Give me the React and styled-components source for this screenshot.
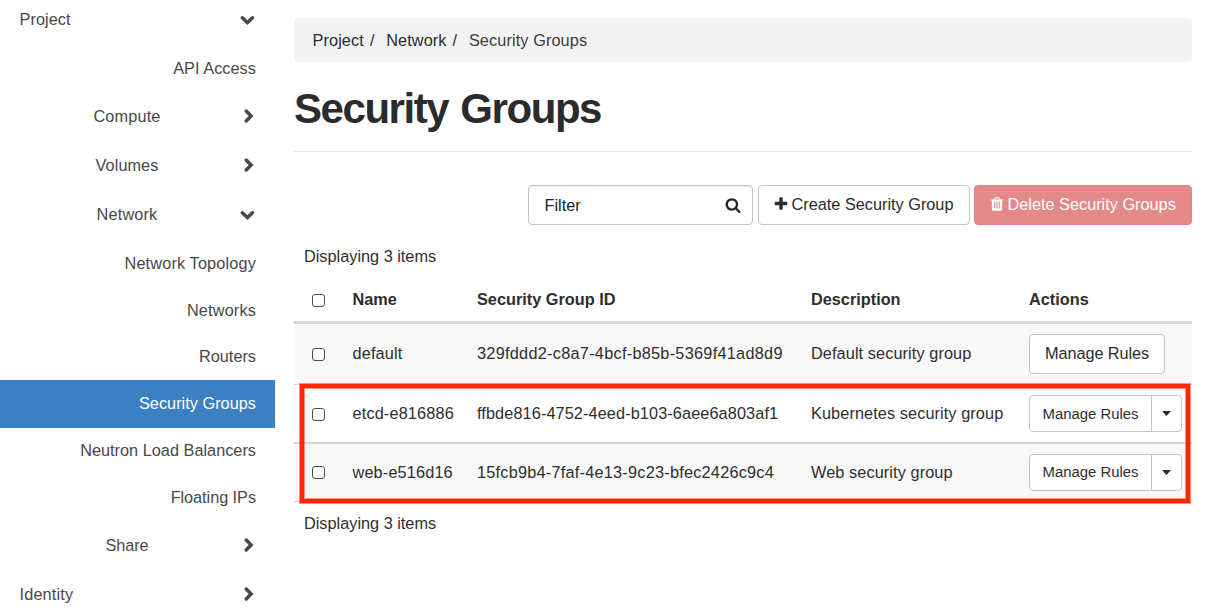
import React from "react";
import styled, { createGlobalStyle } from "styled-components";

const Global = createGlobalStyle`
  * { box-sizing: border-box; }
  html, body { margin: 0; padding: 0; background: #fff; }
  body {
    font-family: "Liberation Sans", Arial, sans-serif;
    font-size: 16.3px;
    line-height: 20px;
    color: #2e2e2e;
    overflow: hidden;
  }
`;

const Page = styled.div`
  display: flex;
  width: 1205px;
  height: 611px;
  overflow: hidden;
`;

/* ---------- sidebar ---------- */

const Sidebar = styled.nav`
  width: 275px;
  flex: none;
  color: #484848;
`;

const NavItem = styled.div`
  display: flex;
  align-items: center;
  height: ${(p) => p.$h}px;
  padding: 0 19px 0 ${(p) => (p.$kind === "top" ? 19.5 : 16)}px;
  padding-bottom: ${(p) => p.$lift || 0}px;
  background: ${(p) => (p.$active ? "#3b80c3" : "transparent")};
  color: ${(p) => (p.$active ? "#fff" : "inherit")};
`;

const NavLabel = styled.span`
  flex: 1;
  white-space: nowrap;
  letter-spacing: ${(p) => p.$track ?? 0.05}px;
  text-align: ${(p) => ({ top: "left", group: "center", leaf: "right" })[p.$kind]};
`;

const ChevronIcon = styled.svg`
  width: 18px;
  height: 18px;
  flex: none;
  fill: none;
  stroke: #484848;
  stroke-width: 3.5;
  stroke-linecap: round;
`;

function Chevron({ dir }) {
  return (
    <ChevronIcon viewBox="0 0 18 18">
      <path d={dir === "down" ? "M4.3 7.8L9.4 12.5L14.5 7.8" : "M8.2 4L13.1 9L8.2 14"} />
    </ChevronIcon>
  );
}

const NAV = [
  { label: "Project", kind: "top", dir: "down", h: 44, lift: 6 },
  { label: "API Access", kind: "leaf", h: 49, lift: 2 },
  { label: "Compute", kind: "group", dir: "right", h: 48, lift: 2, track: 0.15 },
  { label: "Volumes", kind: "group", dir: "right", h: 49, lift: 2 },
  { label: "Network", kind: "group", dir: "down", h: 49, lift: 2, track: 0.15 },
  { label: "Network Topology", kind: "leaf", h: 48, track: 0.15 },
  { label: "Networks", kind: "leaf", h: 46, track: 0.15 },
  { label: "Routers", kind: "leaf", h: 47, lift: 2, track: 0 },
  { label: "Security Groups", kind: "leaf", h: 48, lift: 2, active: true, track: 0.02 },
  { label: "Neutron Load Balancers", kind: "leaf", h: 46, lift: 2, track: 0.01 },
  { label: "Floating IPs", kind: "leaf", h: 47, lift: 2, track: -0.05 },
  { label: "Share", kind: "group", dir: "right", h: 49, lift: 2, track: -0.1 },
  { label: "Identity", kind: "top", dir: "right", h: 49, lift: 2, track: 0.15 },
];

/* ---------- main column ---------- */

const Main = styled.main`
  width: 898px;
  margin-left: 19px;
  padding-top: 18px;
  flex: none;
`;

const Breadcrumb = styled.div`
  display: flex;
  align-items: center;
  height: 44px;
  padding: 0 18px 0 18.5px;
  border-radius: 4px;
  background: #f3f3f3;
  letter-spacing: 0.1px;
`;

const Separator = styled.span`
  width: 22.3px;
  padding-left: 6px;
`;

const Crumb = styled.span`
  color: ${(p) => (p.$current ? "#3c3c3c" : "#2b2b2b")};
`;

const Header = styled.header`
  height: 90px;
  padding-top: 22px;
  border-bottom: 1px solid #e8e8e8;
`;

const Title = styled.h1`
  margin: 0;
  font-size: 42px;
  line-height: 50px;
  font-weight: 700;
  letter-spacing: -1.45px;
  word-spacing: 2px;
  color: #2b2b2b;
`;

const Toolbar = styled.div`
  display: flex;
  justify-content: flex-end;
  margin-top: 33px;
  height: 40px;
`;

const FilterBox = styled.div`
  display: flex;
  align-items: center;
  justify-content: space-between;
  width: 225px;
  padding: 0 11px 0 15.5px;
  border: 1px solid #c4c4c4;
  border-radius: 4px;
  box-shadow: inset 0 1px 1px rgba(0, 0, 0, 0.075);
  color: #222;
`;

const Button = styled.button`
  display: flex;
  align-items: center;
  justify-content: flex-start;
  width: ${(p) => p.$w}px;
  height: 40px;
  margin: 0 0 0 ${(p) => p.$gap || 0}px;
  padding: 0 0 2px ${(p) => p.$inset ?? 14}px;
  border: 1px solid ${(p) => (p.$danger ? "#df8280" : "#c4c4c4")};
  border-radius: 4px;
  background: ${(p) => (p.$danger ? "#e38987" : "#fff")};
  color: ${(p) => (p.$danger ? "#fff" : "#2b2b2b")};
  font: inherit;
  letter-spacing: ${(p) => p.$track || 0}px;
  white-space: nowrap;
`;

const Glyph = styled.svg`
  width: 16px;
  height: 16px;
  fill: currentColor;
  flex: none;
  margin-right: ${(p) => p.$after || 0}px;
`;

const ItemCount = styled.div`
  height: ${(p) => p.$h}px;
  padding: ${(p) => p.$top}px 0 0 10px;
`;

const Table = styled.div`
  position: relative;
`;

const Row = styled.div`
  display: grid;
  grid-template-columns: 58.5px 124.5px 334px 218px 1fr;
  align-items: center;
  height: ${(p) => p.$h}px;
  background: ${(p) => (p.$striped ? "#f8f8f8" : "#fff")};
  border-bottom: ${(p) => p.$line}px solid #d6d6d6;
`;

const HeadRow = styled(Row)`
  font-weight: 700;
  letter-spacing: -0.04px;
  padding-bottom: 1px;
`;

const Cell = styled.div`
  white-space: nowrap;
  letter-spacing: ${(p) => p.$track || 0}px;
  padding-bottom: ${(p) => p.$lift || 0}px;
`;

const Check = styled.div`
  width: 13px;
  height: 13px;
  margin: ${(p) => p.$drop ?? 2}px 0 0 17.5px;
  border: 1px solid #4c4c4c;
  border-radius: 3px;
  background: #fff;
`;

const Split = styled.div`
  display: flex;
  width: 153px;
  height: 37px;
  border: 1px solid #c4c4c4;
  border-radius: 4px;
  background: #fff;
  font-size: 14.9px;
`;

const SplitMain = styled.div`
  display: flex;
  align-items: center;
  justify-content: center;
  width: 122px;
  padding-bottom: ${(p) => p.$lift || 0}px;
  border-right: 1px solid #c4c4c4;
`;

const SplitToggle = styled.div`
  display: flex;
  flex: 1;
  align-items: center;
  justify-content: center;
`;

const Caret = styled.span`
  width: 9px;
  height: 5px;
  background: #2b2b2b;
  clip-path: polygon(0 0, 100% 0, 50% 100%);
`;

const Highlight = styled.div`
  position: absolute;
  left: 6px;
  top: 106px;
  width: 890px;
  height: 119px;
  border: 4px solid #ff2600;
  box-shadow: 0 0 0 1px rgba(255, 38, 0, 0.5), inset 0 0 0 1px rgba(255, 38, 0, 0.5);
`;

const SEARCH =
  "M1216 832q0-185-131.5-316.5t-316.5-131.5-316.5 131.5-131.5 316.5 131.5 316.5 316.5 131.5 316.5-131.5 131.5-316.5zm512 832q0 52-38 90t-90 38q-54 0-90-38l-343-342q-179 124-399 124-143 0-273.5-55.5t-225-150-150-225-55.5-273.5 55.5-273.5 150-225 225-150 273.5-55.5 273.5 55.5 225 150 150 225 55.5 273.5q0 220-124 399l343 343q37 37 37 90z";
const PLUS =
  "M1600 736v192q0 40-28 68t-68 28h-416v416q0 40-28 68t-68 28h-192q-40 0-68-28t-28-68v-416h-416q-40 0-68-28t-28-68v-192q0-40 28-68t68-28h416v-416q0-40 28-68t68-28h192q40 0 68 28t28 68v416h416q40 0 68 28t28 68z";
const TRASH =
  "M704 1376v-704q0-14-9-23t-23-9h-64q-14 0-23 9t-9 23v704q0 14 9 23t23 9h64q14 0 23-9t9-23zm256 0v-704q0-14-9-23t-23-9h-64q-14 0-23 9t-9 23v704q0 14 9 23t23 9h64q14 0 23-9t9-23zm256 0v-704q0-14-9-23t-23-9h-64q-14 0-23 9t-9 23v704q0 14 9 23t23 9h64q14 0 23-9t9-23zm-544-992h448l-48-117q-7-9-17-11h-317q-10 2-17 11zm928 32v64q0 14-9 23t-23 9h-96v948q0 83-47 143.5t-113 60.5h-832q-66 0-113-58.5t-47-141.5v-952h-96q-14 0-23-9t-9-23v-64q0-14 9-23t23-9h309l70-167q15-37 54-63t79-26h320q40 0 79 26t54 63l70 167h309q14 0 23 9t9 23z";

const GROUPS = [
  { name: "default", id: "329fddd2-c8a7-4bcf-b85b-5369f41ad8d9", track: 0.27, desc: "Default security group", h: 61, line: 1, striped: true, drop: 1 },
  { name: "etcd-e816886", id: "ffbde816-4752-4eed-b103-6aee6a803af1", track: 0.1, desc: "Kubernetes security group", h: 59, line: 2, split: true, drop: 2 },
  { name: "web-e516d16", id: "15fcb9b4-7faf-4e13-9c23-bfec2426c9c4", track: 0.23, desc: "Web security group", h: 58, line: 1, striped: true, split: true, drop: 0 },
];

function Actions({ split, lift }) {
  if (!split)
    return (
      <Button $w={136} $inset={15} $track={-0.08}>
        Manage Rules
      </Button>
    );
  return (
    <Split>
      <SplitMain $lift={lift}>Manage Rules</SplitMain>
      <SplitToggle>
        <Caret />
      </SplitToggle>
    </Split>
  );
}

export default function App() {
  return (
    <Page>
      <Global />
      <Sidebar>
        {NAV.map((n) => (
          <NavItem key={n.label} $kind={n.kind} $h={n.h} $lift={n.lift} $active={n.active}>
            <NavLabel $kind={n.kind} $track={n.track}>{n.label}</NavLabel>
            {n.dir && <Chevron dir={n.dir} />}
          </NavItem>
        ))}
      </Sidebar>
      <Main>
        <Breadcrumb>
          <Crumb>Project</Crumb>
          <Separator>/</Separator>
          <Crumb>Network</Crumb>
          <Separator>/</Separator>
          <Crumb $current>Security Groups</Crumb>
        </Breadcrumb>
        <Header>
          <Title>Security Groups</Title>
        </Header>
        <Toolbar>
          <FilterBox>
            Filter
            <Glyph viewBox="0 0 1792 1792">
              <path d={SEARCH} />
            </Glyph>
          </FilterBox>
          <Button $w={212} $gap={5} $inset={13.5}>
            <Glyph viewBox="0 0 1792 1792" $after={3}>
              <path d={PLUS} />
            </Glyph>
            Create Security Group
          </Button>
          <Button $w={218} $gap={4} $inset={13.5} $danger>
            <Glyph viewBox="0 0 1792 1792" $after={3}>
              <path d={TRASH} />
            </Glyph>
            Delete Security Groups
          </Button>
        </Toolbar>
        <ItemCount $h={53} $top={21}>Displaying 3 items</ItemCount>
        <Table>
          <HeadRow $h={46} $line={3}>
            <Check />
            <Cell>Name</Cell>
            <Cell>Security Group ID</Cell>
            <Cell>Description</Cell>
            <Cell>Actions</Cell>
          </HeadRow>
          {GROUPS.map((g) => (
            <Row key={g.name} $h={g.h} $line={g.line} $striped={g.striped}>
              <Check $drop={g.drop} />
              <Cell $track={0.15} $lift={2}>{g.name}</Cell>
              <Cell $track={g.track} $lift={2}>{g.id}</Cell>
              <Cell $track={0.09} $lift={2}>{g.desc}</Cell>
              <Actions split={g.split} lift={g.striped ? 2 : 0} />
            </Row>
          ))}
          <Highlight />
        </Table>
        <ItemCount $h={40} $top={11}>Displaying 3 items</ItemCount>
      </Main>
    </Page>
  );
}
